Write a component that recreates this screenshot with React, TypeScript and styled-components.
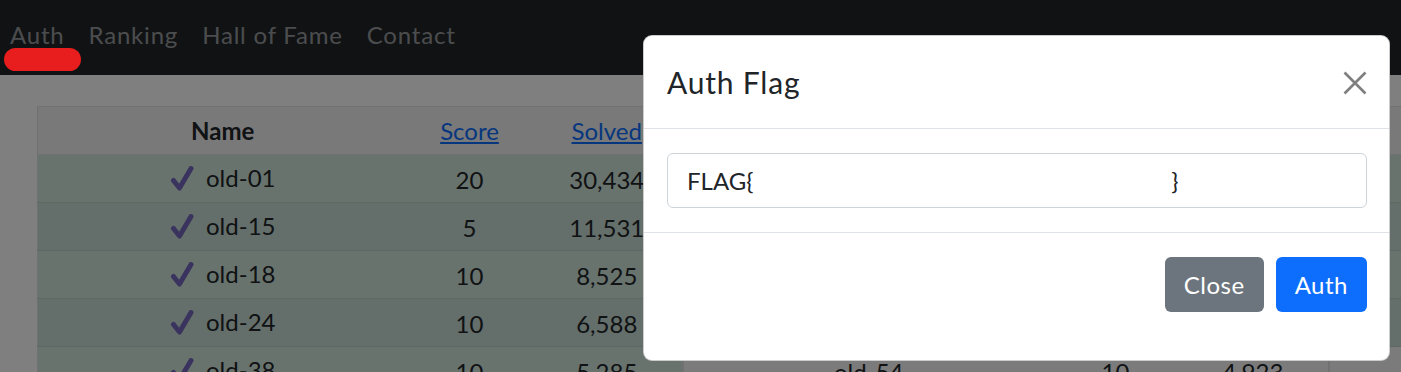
import React from "react";
import styled, { createGlobalStyle } from "styled-components";

const FONT = `"Lato", "Open Sans", "Noto Sans", sans-serif`;

const Global = createGlobalStyle`
  html, body {
    margin: 0;
    padding: 0;
    overflow: hidden;
    background: #ffffff;
    font-family: ${FONT};
    color: #212529;
  }
  * { box-sizing: border-box; }
`;

const Page = styled.div`
  position: relative;
  width: 1401px;
  height: 372px;
  overflow: hidden;
  background: #ffffff;
`;

const Navbar = styled.nav`
  height: 75px;
  background: #212529;
  display: flex;
  align-items: center;
  padding: 0 0 5px 10px;
`;

const NavLink = styled.a`
  color: rgba(255, 255, 255, 0.55);
  font-size: 24px;
  letter-spacing: 0.8px;
  text-decoration: none;
  margin-right: 24px;
  line-height: 36px;
`;

const Main = styled.main`
  display: flex;
  padding: 31px 0 0 37px;
  white-space: nowrap;
`;

const Table = styled.table`
  flex: 0 0 645px;
  width: 645px;
  border-collapse: collapse;
  table-layout: fixed;
  border: 1px solid #dee2e6;
  font-size: 24px;
`;

const HeadCell = styled.th<{ $w: number }>`
  width: ${(p) => p.$w}px;
  height: 48px;
  padding: 0 6px;
  background: #f2f2f2;
  font-weight: 700;
  text-align: center;
  border-bottom: 1px solid #dee2e6;
`;

const SortLink = styled.a`
  color: #0d6efd;
  font-weight: 400;
  text-decoration: underline;
`;

const Row = styled.tr<{ $solved: boolean; $alt: boolean }>`
  height: 48px;
  background: ${(p) =>
    p.$solved ? (p.$alt ? "#c8ddd4" : "#d1e7dd") : p.$alt ? "#f2f2f2" : "#f7f7f7"};
  border-bottom: 1px solid ${(p) => (p.$solved ? "#bcd0c7" : "#dee2e6")};
`;

const Cell = styled.td`
  padding: 2px 6px 0;
  text-align: center;
  line-height: 36px;
`;

const NameWrap = styled.span`
  display: inline-flex;
  align-items: center;
  gap: 12px;
`;

const Check = () => (
  <svg width="24" height="26" viewBox="0 0 24 26" aria-hidden="true">
    <path
      d="M3.5 15.5 L9.5 23 L21 3.5"
      fill="none"
      stroke="#7267bd"
      strokeWidth="5"
      strokeLinecap="round"
      strokeLinejoin="round"
    />
  </svg>
);

const Backdrop = styled.div`
  position: absolute;
  inset: 0;
  background: rgba(0, 0, 0, 0.5);
  z-index: 10;
`;

const Marker = styled.div`
  position: absolute;
  left: 4px;
  top: 48px;
  width: 77px;
  height: 23px;
  border-radius: 12px;
  background: #e81d1d;
  z-index: 30;
`;

const Modal = styled.div`
  position: absolute;
  left: 643px;
  top: 35px;
  width: 747px;
  background: #ffffff;
  border: 1px solid rgba(0, 0, 0, 0.2);
  border-radius: 9px;
  z-index: 20;
  display: flex;
  flex-direction: column;
`;

const ModalHeader = styled.div`
  height: 93px;
  display: flex;
  align-items: center;
  justify-content: space-between;
  padding: 0 22px 0 23px;
  border-bottom: 1px solid #dee2e6;
`;

const ModalTitle = styled.h5`
  margin: 0;
  font-size: 30px;
  font-weight: 400;
  letter-spacing: 0.8px;
  line-height: 36px;
  color: #212529;
`;

const CloseX = styled.button`
  width: 24px;
  height: 26px;
  padding: 0;
  border: 0;
  background: transparent;
  display: flex;
  align-items: center;
  justify-content: center;
  margin-top: 2px;
`;

const ModalBody = styled.div`
  padding: 24px 22px 24px 23px;
  border-bottom: 1px solid #dee2e6;
`;

const FlagInput = styled.input`
  display: block;
  width: 100%;
  height: 55px;
  border: 1px solid #ced4da;
  border-radius: 6px;
  padding: 0 19px;
  font-family: ${FONT};
  font-size: 24px;
  color: #212529;
  outline: none;
`;

const ModalFooter = styled.div`
  display: flex;
  justify-content: flex-end;
  gap: 12px;
  padding: 24px 22px 48px 23px;
`;

const Button = styled.button<{ $variant: "secondary" | "primary" }>`
  height: 55px;
  padding: 0 19px;
  border: 0;
  border-radius: 6px;
  font-family: ${FONT};
  font-size: 24px;
  letter-spacing: 0.5px;
  color: #ffffff;
  background: ${(p) => (p.$variant === "primary" ? "#0d6efd" : "#6c757d")};
`;

type Entry = { name: string; score: number; solved: string; ok: boolean };

const tables: Entry[][] = [
  [
    { name: "old-01", score: 20, solved: "30,434", ok: true },
    { name: "old-15", score: 5, solved: "11,531", ok: true },
    { name: "old-18", score: 10, solved: "8,525", ok: true },
    { name: "old-24", score: 10, solved: "6,588", ok: true },
    { name: "old-38", score: 10, solved: "5,285", ok: true },
  ],
  [
    { name: "old-41", score: 10, solved: "5,270", ok: true },
    { name: "old-44", score: 10, solved: "5,112", ok: true },
    { name: "old-47", score: 10, solved: "5,040", ok: true },
    { name: "old-51", score: 10, solved: "4,981", ok: true },
    { name: "old-54", score: 10, solved: "4,923", ok: false },
  ],
  [
    { name: "old-02", score: 10, solved: "4,901", ok: true },
    { name: "old-05", score: 10, solved: "4,870", ok: true },
    { name: "old-07", score: 10, solved: "4,811", ok: true },
    { name: "old-09", score: 10, solved: "4,790", ok: true },
    { name: "old-11", score: 10, solved: "4,702", ok: false },
  ],
];

const flagValue = "FLAG{" + " ".repeat(68) + "}";

export default function App() {
  return (
    <Page>
      <Global />
      <Navbar>
        <NavLink href="#">Auth</NavLink>
        <NavLink href="#">Ranking</NavLink>
        <NavLink href="#">Hall of Fame</NavLink>
        <NavLink href="#">Contact</NavLink>
      </Navbar>
      <Main>
        {tables.map((rows, ti) => (
          <Table key={ti}>
            <thead>
              <tr>
                <HeadCell $w={370}>Name</HeadCell>
                <HeadCell $w={124}>
                  <SortLink href="#">Score</SortLink>
                </HeadCell>
                <HeadCell $w={151}>
                  <SortLink href="#">Solved</SortLink>
                </HeadCell>
              </tr>
            </thead>
            <tbody>
              {rows.map((r, i) => (
                <Row key={r.name} $solved={r.ok} $alt={i % 2 === 1}>
                  <Cell>
                    <NameWrap>
                      {r.ok && <Check />}
                      {r.name}
                    </NameWrap>
                  </Cell>
                  <Cell>{r.score}</Cell>
                  <Cell>{r.solved}</Cell>
                </Row>
              ))}
            </tbody>
          </Table>
        ))}
      </Main>
      <Backdrop />
      <Marker />
      <Modal role="dialog">
        <ModalHeader>
          <ModalTitle>Auth Flag</ModalTitle>
          <CloseX aria-label="Close">
            <svg width="24" height="24" viewBox="0 0 24 24">
              <path
                d="M1.5 1.5 L22.5 22.5 M22.5 1.5 L1.5 22.5"
                stroke="#000"
                strokeOpacity="0.5"
                strokeWidth="2.6"
              />
            </svg>
          </CloseX>
        </ModalHeader>
        <ModalBody>
          <FlagInput type="text" defaultValue={flagValue} />
        </ModalBody>
        <ModalFooter>
          <Button $variant="secondary">Close</Button>
          <Button $variant="primary">Auth</Button>
        </ModalFooter>
      </Modal>
    </Page>
  );
}
